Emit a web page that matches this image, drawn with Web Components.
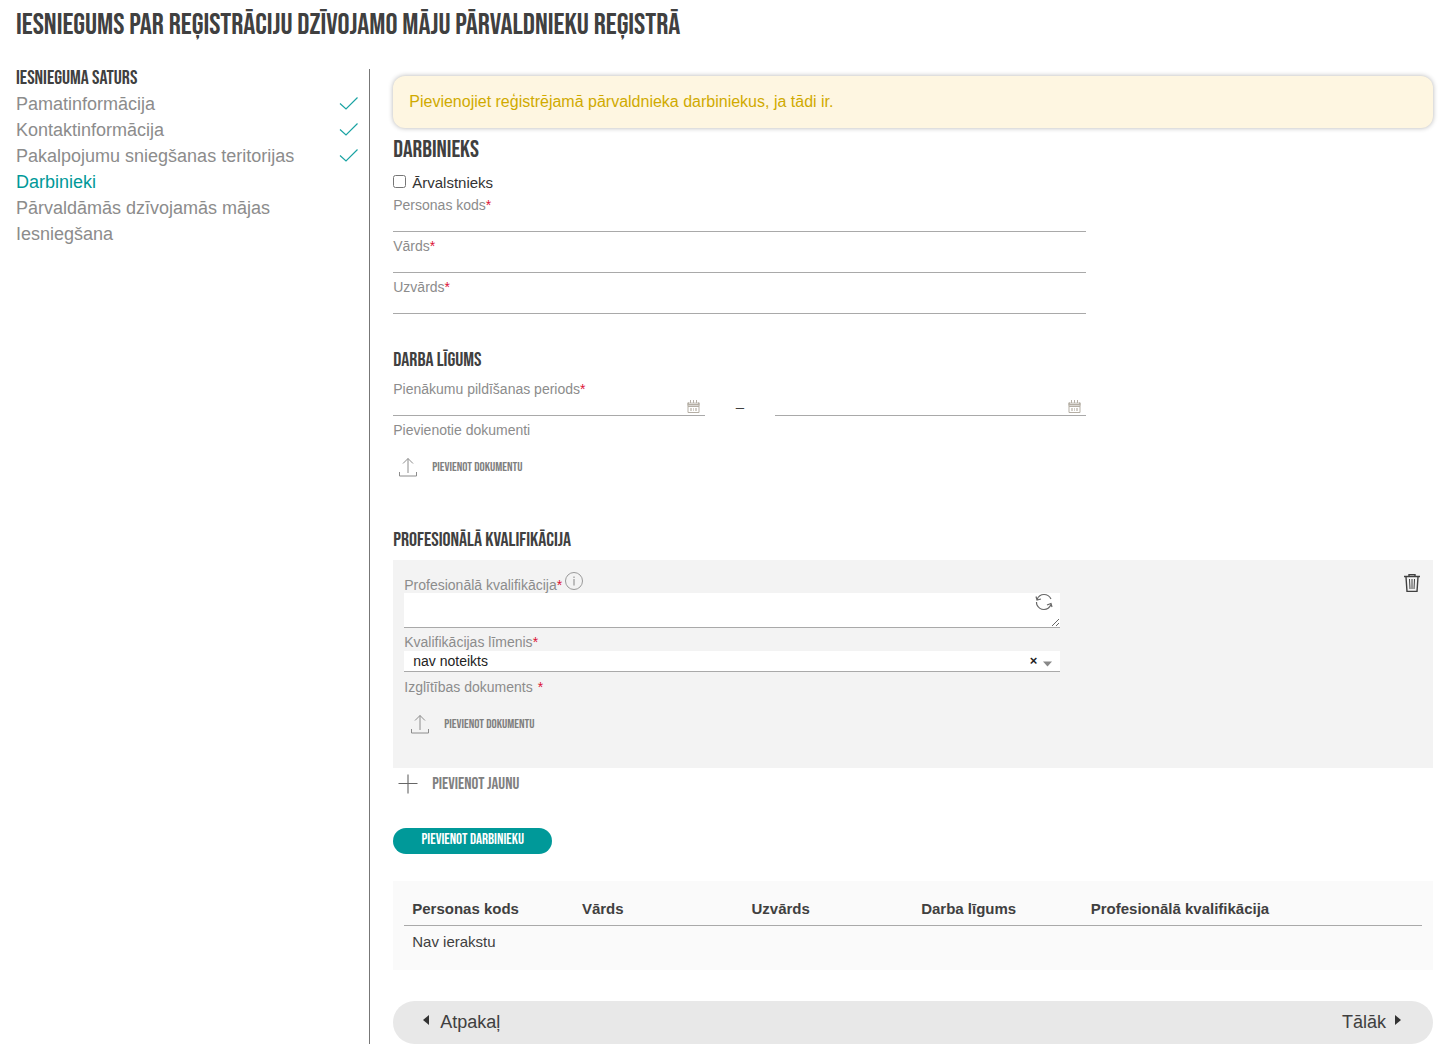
<!DOCTYPE html>
<html lang="lv">
<head>
<meta charset="utf-8">
<title>Iesniegums par reģistrāciju</title>
<style>
:root{--display:"Bebas Neue","Liberation Sans Narrow","Roboto Condensed","Liberation Sans",sans-serif;--ink:#404040;--muted:#8c8c8c;--accent:#009999;--line:#a9a9a9}
body{margin:0;background:#fff;color:var(--ink);font-family:Arial,"Liberation Sans",sans-serif}
</style>
</head>
<body>
<registry-page></registry-page>
<script>
const define=(name,html,setup)=>{
  const t=document.createElement('template');t.innerHTML=html;
  customElements.define(name,class extends HTMLElement{
    connectedCallback(){
      if(this.shadowRoot)return;
      this.attachShadow({mode:'open'}).append(t.content.cloneNode(true));
      if(setup)setup(this,this.shadowRoot);
    }
  });
};

const icons={
  check:'<svg viewBox="0 0 20 16" width="20" height="16"><path d="M1 7.500 7 13 18.500 1.500" fill="none" stroke="#1aa3a3" stroke-width="1.200"/></svg>',
  upload:'<svg viewBox="0 0 20 20" width="20" height="20" fill="none" stroke="#8c8c8c"><path d="M1.500 15v4h17v-4M10 16V1.500M5 6.500l5-5 5 5"/></svg>',
  plus:'<svg viewBox="0 0 20 20" width="20" height="20" fill="none"><path d="M10 .5v19" stroke="#aaa" stroke-width="2"/><path d="M.5 9.500h19" stroke="#666"/></svg>',
  calendar:'<svg viewBox="0 0 13 13" width="13" height="13"><path d="M1 3h11v9.500H1z" fill="#fff" stroke="#b5afa5"/><path d="M.5 2.500h12v3H.5z" fill="#b5afa5"/><path d="M3.500 0v4M6.500 0v4M9.500 0v4" stroke="#fff" stroke-width="2"/><path d="M3.500 0v3.500M6.500 0v3.500M9.500 0v3.500" stroke="#b5afa5"/><path d="M1 6.500h11" stroke="#b5afa5"/><path d="M3 8h2v3H3zM6 8h1v3H6zM8 8h2v3H8z" fill="#d3cfc8"/></svg>',
  info:'<svg viewBox="0 0 18 18" width="18" height="18"><circle cx="9" cy="9" r="8.500" fill="none" stroke="#999"/><path d="M9 7v6.500M9 4.500V6" stroke="#aaa" stroke-width="1.500"/></svg>',
  refresh:'<svg viewBox="0 0 18 18" width="18" height="18" fill="none" stroke="#666" stroke-width="1.200"><path d="M2 6.500C3.500 3 6 1.500 9 1.500c3 0 5.500 1.500 7 4.500M16 11.500c-1.500 3.500-4 5-7 5-3 0-5.500-1.500-7-4.500-.5-1-.5-2-.5-3M1 3.500l1 3.500 4-1M17 14l-1-3.500-4 1.500"/></svg>',
  trash:'<svg viewBox="0 0 18 18" width="18" height="18" fill="none" stroke="#404040"><path d="M1 2.500h16M6 2.500v-2h6v2M3 3l1 14.500h10l1-14.500" stroke-width="1.400"/><path d="M6.500 5l.5 10M9 5v10M11.500 5l-.5 10"/></svg>',
  left:'<svg viewBox="0 0 8 12" width="8" height="12"><path d="M7 1v10L1 6z" fill="#333"/></svg>',
  right:'<svg viewBox="0 0 8 12" width="8" height="12"><path d="M1 1v10l6-5z" fill="#333"/></svg>',
  down:'<svg viewBox="0 0 9 6" width="9" height="6"><path d="M0 .5h9L4.500 5.500z" fill="#888"/></svg>'
};
define('ui-icon','<style>:host{display:block;flex:none}svg{display:block}</style>',(el,r)=>{
  const d=document.createElement('span');d.innerHTML=icons[el.getAttribute('name')];r.append(d.firstChild);
});

define('step-link',`<style>
:host{display:block}
a{display:flex;justify-content:space-between;align-items:center;font-size:18px;line-height:26px;color:var(--muted);text-decoration:none;padding-right:10px}
:host([current]) a{color:var(--accent)}
</style><a href="#"><slot></slot></a>`,(el,r)=>{
  if(el.hasAttribute('current'))r.querySelector('a').setAttribute('aria-current','step');
  if(el.hasAttribute('done'))r.querySelector('a').insertAdjacentHTML('beforeend','<ui-icon name="check"></ui-icon>');
});

define('step-list',`<style>
:host{display:block;border-right:1px solid #777}
h2{margin:0 0 4px;font:20px/18px var(--display);text-transform:uppercase}
</style><nav><h2>Iesnieguma saturs</h2>
<step-link done>Pamatinformācija</step-link><step-link done>Kontaktinformācija</step-link><step-link done>Pakalpojumu sniegšanas teritorijas</step-link><step-link current>Darbinieki</step-link><step-link>Pārvaldāmās dzīvojamās mājas</step-link><step-link>Iesniegšana</step-link></nav>`);

define('info-alert',`<style>
:host{display:block;padding:16px;background:#fef6e1;color:#d0aa00;border-radius:12px;box-shadow:0 0 5px rgba(0,0,0,.3);font-size:16px;line-height:20px}
</style><slot></slot>`);

define('section-title',`<style>
:host{display:block}
h2{margin:0;font:20px/20px var(--display);text-transform:uppercase}
:host([large]) h2{font-size:24px;line-height:24px}
</style><h2><slot></slot></h2>`);

const label='font-size:14px;line-height:18px;color:var(--muted)';
define('text-field',`<style>
:host{display:block;margin-bottom:5px}
label{display:block;${label}}
b{font-weight:400;color:#dc1437}
input{display:block;box-sizing:border-box;width:100%;height:18px;margin:0;padding:0 8px;border:0;border-bottom:1px solid var(--line);background:transparent;font:14px Arial,"Liberation Sans",sans-serif;color:var(--ink)}
</style><label for="i"><slot></slot><b>*</b></label><input id="i" type="text">`);

define('date-input',`<style>
:host{display:flex;box-sizing:border-box;height:18px;border-bottom:1px solid var(--line);padding-right:5px;align-items:center}
input{flex:1;min-width:0;height:17px;border:0;padding:0 8px;background:transparent;font:14px Arial,"Liberation Sans",sans-serif}
button{border:0;padding:0;background:none}
</style><input type="text"><button type="button" aria-label="Kalendārs"><ui-icon name="calendar"></ui-icon></button>`,(el,r)=>r.querySelector('input').setAttribute('aria-label',el.getAttribute('name')));

define('period-field',`<style>
fieldset{border:0;margin:0;padding:0;min-width:0}
:host{display:block;margin-bottom:5px}
legend{padding:0;${label}}b{font-weight:400;color:#dc1437}
div{display:grid;grid-template-columns:45% 1fr 45%}
span{text-align:center;font-size:15px;line-height:18px}
</style><fieldset><legend><slot></slot><b>*</b></legend><div><date-input name="Sākuma datums"></date-input><span>–</span><date-input name="Beigu datums"></date-input></div></fieldset>`);

define('action-button',`<style>
:host{display:block}
button{display:flex;align-items:center;gap:14px;height:20px;padding:0 5px;border:0;background:none;color:#808080;font:13px/20px var(--display);text-transform:uppercase}
:host([large]) button{font-size:17px}
</style><button type="button"><span><slot></slot></span></button>`,(el,r)=>{
  r.querySelector('button').insertAdjacentHTML('afterbegin','<ui-icon name="'+el.getAttribute('icon')+'"></ui-icon>');
});

define('qualification-card',`<style>
:host{display:flex;justify-content:space-between;align-items:flex-start;box-sizing:border-box;background:#f3f3f3;padding:12px 12px 34px 11px}
.fields{width:656px;max-width:90%}
label,.label{display:flex;${label}}b{font-weight:400;color:#dc1437}
.top{display:flex;gap:3px;height:21px}.top label{padding-top:4px}
.area{display:grid;margin-bottom:5px}
textarea,select{box-sizing:border-box;width:100%;border:0;border-bottom:1px solid var(--line);border-radius:0;background:#fff;margin:0;display:block;font:14px Arial,"Liberation Sans",sans-serif;color:#222}
textarea{height:35px;padding:2px 30px 2px 9px}
textarea,.area button{grid-area:1/1}
select{appearance:none;height:21px;padding:0 40px 0 9px}
button{border:0;padding:0;background:none;color:#222}
.area button{justify-self:end;align-self:start;margin:0 7px 0 0}
.pick{display:grid;margin-bottom:6px}
.pick select,.pick div{grid-area:1/1}
.pick div{justify-self:end;align-self:center;display:flex;align-items:center;gap:6px;padding:0 8px 2px 0;pointer-events:none}
.pick button{font:bold 13px/18px Arial,"Liberation Sans",sans-serif;pointer-events:auto}
.pick ui-icon{padding-top:6px}
.label{gap:5px}
action-button{margin:18px 0 0 1px}
.del{padding-top:2px}
</style>
<div class="fields">
<div class="top"><label for="q">Profesionālā kvalifikācija<b>*</b></label><ui-icon name="info"></ui-icon></div>
<div class="area"><textarea id="q"></textarea><button type="button" aria-label="Atjaunot"><ui-icon name="refresh"></ui-icon></button></div>
<label for="l">Kvalifikācijas līmenis<b>*</b></label>
<div class="pick"><select id="l"><option>nav noteikts</option></select><div><button type="button" aria-label="Notīrīt">×</button><ui-icon name="down"></ui-icon></div></div>
<div class="label">Izglītības dokuments <b>*</b></div>
<action-button icon="upload">Pievienot dokumentu</action-button>
</div>
<button class="del" type="button" aria-label="Dzēst"><ui-icon name="trash"></ui-icon></button>`);

define('staff-table',`<style>
:host{display:block;background:#fafafa;padding:11px 11px 12px}
table{width:100%;border-collapse:collapse;table-layout:fixed;font-size:15px;line-height:20px}
th,td{text-align:left;padding:7px 8px}
th{border-bottom:1px solid var(--line);white-space:nowrap;padding-bottom:6px}
tbody td{padding:6px 8px}
</style><table><thead><tr><th>Personas kods</th><th>Vārds</th><th>Uzvārds</th><th>Darba līgums</th><th colspan="2">Profesionālā kvalifikācija</th></tr></thead><tbody><tr><td colspan="6">Nav ierakstu</td></tr></tbody></table>`);

define('page-nav',`<style>
:host{display:flex;justify-content:space-between;box-sizing:border-box;height:43px;padding:0 31px 2px 29px;background:#e8e8e8;border-radius:22px}
button{display:flex;align-items:center;gap:10px;border:0;padding:0;background:none;color:var(--ink);font:18px/20px Arial,"Liberation Sans",sans-serif}
.next{gap:8px}
ui-icon{padding-bottom:3px}
</style><button type="button"><ui-icon name="left"></ui-icon>Atpakaļ</button><button type="button" class="next">Tālāk<ui-icon name="right"></ui-icon></button>`);

define('employee-form',`<style>
:host{display:block;padding-top:7px}
.narrow{width:66.666%}
info-alert{margin-bottom:10px}
.check{display:flex;align-items:center;gap:6px;font-size:15px;line-height:20px;color:#333;margin:11px 0 3px}
.check input{width:13px;height:13px;margin:0 0 4px}
.contract{margin:36px 0 10px}
.doc{${label}}
.upload{margin:18px 0 53px}
qualification-card{margin:10px 0 6px}
.save{display:block;min-width:159px;height:26px;margin:34px 0 27px;padding:0 25px 2px;border:0;border-radius:13px;background:var(--accent);color:#fff;font:15px/24px var(--display);text-transform:uppercase}
page-nav{margin-top:31px}
</style>
<info-alert>Pievienojiet reģistrējamā pārvaldnieka darbiniekus, ja tādi ir.</info-alert>
<section-title large>Darbinieks</section-title>
<div class="narrow">
<label class="check"><input type="checkbox"><span>Ārvalstnieks</span></label>
<text-field>Personas kods</text-field><text-field>Vārds</text-field><text-field>Uzvārds</text-field>
<section-title class="contract">Darba līgums</section-title>
<period-field>Pienākumu pildīšanas periods</period-field>
<div class="doc">Pievienotie dokumenti</div>
<action-button class="upload" icon="upload">Pievienot dokumentu</action-button>
</div>
<section-title>Profesionālā kvalifikācija</section-title>
<qualification-card></qualification-card>
<action-button large icon="plus">Pievienot jaunu</action-button>
<button class="save" type="button">Pievienot darbinieku</button>
<staff-table></staff-table>
<page-nav></page-nav>`);

define('registry-page',`<style>
:host{display:block;padding:11px 18px 8px 16px}
h1{margin:0 0 30px;font:30px/28px var(--display);text-transform:uppercase}
main{display:grid;grid-template-columns:25% 1fr;column-gap:23px}
</style><h1>Iesniegums par reģistrāciju dzīvojamo māju pārvaldnieku reģistrā</h1>
<main><step-list></step-list><employee-form></employee-form></main>`);
</script>
</body>
</html>
